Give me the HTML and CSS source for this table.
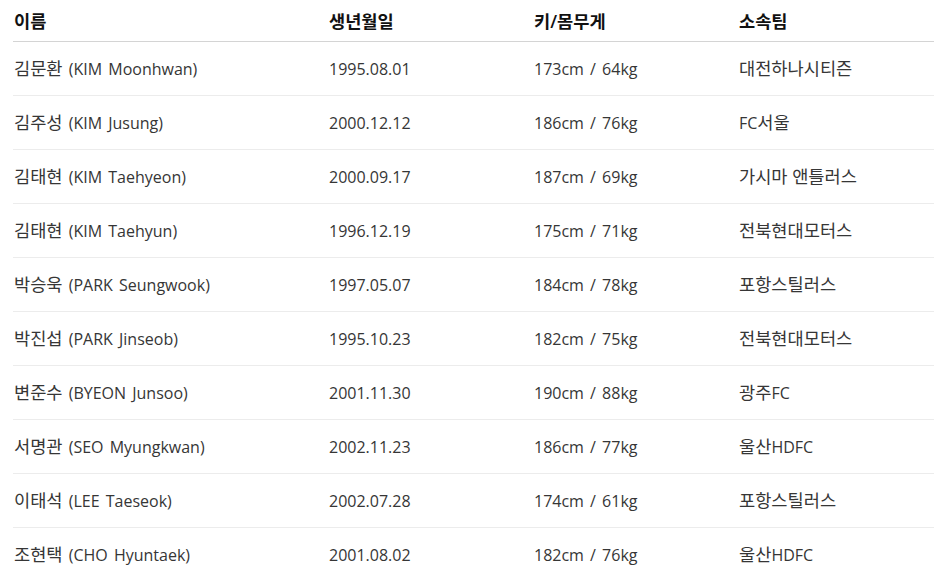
FILE: index.html
```html
<!DOCTYPE html>
<html lang="ko">
<head>
<meta charset="utf-8">
<link rel="stylesheet" href="styles.css">
</head>
<body>
<table class="players">
  <thead>
    <tr><th class="c-name"><span class="ko">이름</span></th><th class="c-birth"><span class="ko">생년월일</span></th><th class="c-body"><span class="ko">키/몸무게</span></th><th><span class="ko">소속팀</span></th></tr>
  </thead>
  <tbody>
    <tr><td><span class="ko">김문환</span> (KIM Moonhwan)</td><td>1995.08.01</td><td>173cm / 64kg</td><td><span class="ko">대전하나시티즌</span></td></tr>
    <tr><td><span class="ko">김주성</span> (KIM Jusung)</td><td>2000.12.12</td><td>186cm / 76kg</td><td>FC<span class="ko">서울</span></td></tr>
    <tr><td><span class="ko">김태현</span> (KIM Taehyeon)</td><td>2000.09.17</td><td>187cm / 69kg</td><td><span class="ko">가시마 앤틀러스</span></td></tr>
    <tr><td><span class="ko">김태현</span> (KIM Taehyun)</td><td>1996.12.19</td><td>175cm / 71kg</td><td><span class="ko">전북현대모터스</span></td></tr>
    <tr><td><span class="ko">박승욱</span> (PARK Seungwook)</td><td>1997.05.07</td><td>184cm / 78kg</td><td><span class="ko">포항스틸러스</span></td></tr>
    <tr><td><span class="ko">박진섭</span> (PARK Jinseob)</td><td>1995.10.23</td><td>182cm / 75kg</td><td><span class="ko">전북현대모터스</span></td></tr>
    <tr><td><span class="ko">변준수</span> (BYEON Junsoo)</td><td>2001.11.30</td><td>190cm / 88kg</td><td><span class="ko">광주</span>FC</td></tr>
    <tr><td><span class="ko">서명관</span> (SEO Myungkwan)</td><td>2002.11.23</td><td>186cm / 77kg</td><td><span class="ko">울산</span>HDFC</td></tr>
    <tr><td><span class="ko">이태석</span> (LEE Taeseok)</td><td>2002.07.28</td><td>174cm / 61kg</td><td><span class="ko">포항스틸러스</span></td></tr>
    <tr><td><span class="ko">조현택</span> (CHO Hyuntaek)</td><td>2001.08.02</td><td>182cm / 76kg</td><td><span class="ko">울산</span>HDFC</td></tr>
  </tbody>
</table>
</body>
</html>
```
FILE: styles.css
```css
html, body {
  margin: 0;
  padding: 0;
  background: #ffffff;
}
body {
  padding: 0 12px 0 13px;
  font-family: "Open Sans", "Noto Sans CJK KR", sans-serif;
  font-size: 16px;
  color: #363636;
  word-spacing: 2px;
}
.ko {
  font-size: 17.6px;
  word-spacing: 0;
}
.players {
  width: 100%;
  border-collapse: collapse;
  table-layout: fixed;
}
.players th, .players td {
  text-align: left;
  white-space: nowrap;
  line-height: 20px;
}
.players th {
  height: 41px;
  box-sizing: border-box;
  padding: 2px 0 0 1px;
  font-weight: 600;
  color: #111111;
  border-bottom: 1px solid #d4d4d4;
}
.players td {
  height: 54px;
  box-sizing: border-box;
  padding: 1px 0 0 1px;
  border-bottom: 1px solid #ececec;
}
.players tbody tr:last-child td {
  border-bottom: none;
}
.c-name { width: 315px; }
.c-birth { width: 205px; }
.c-body { width: 205px; }
```
